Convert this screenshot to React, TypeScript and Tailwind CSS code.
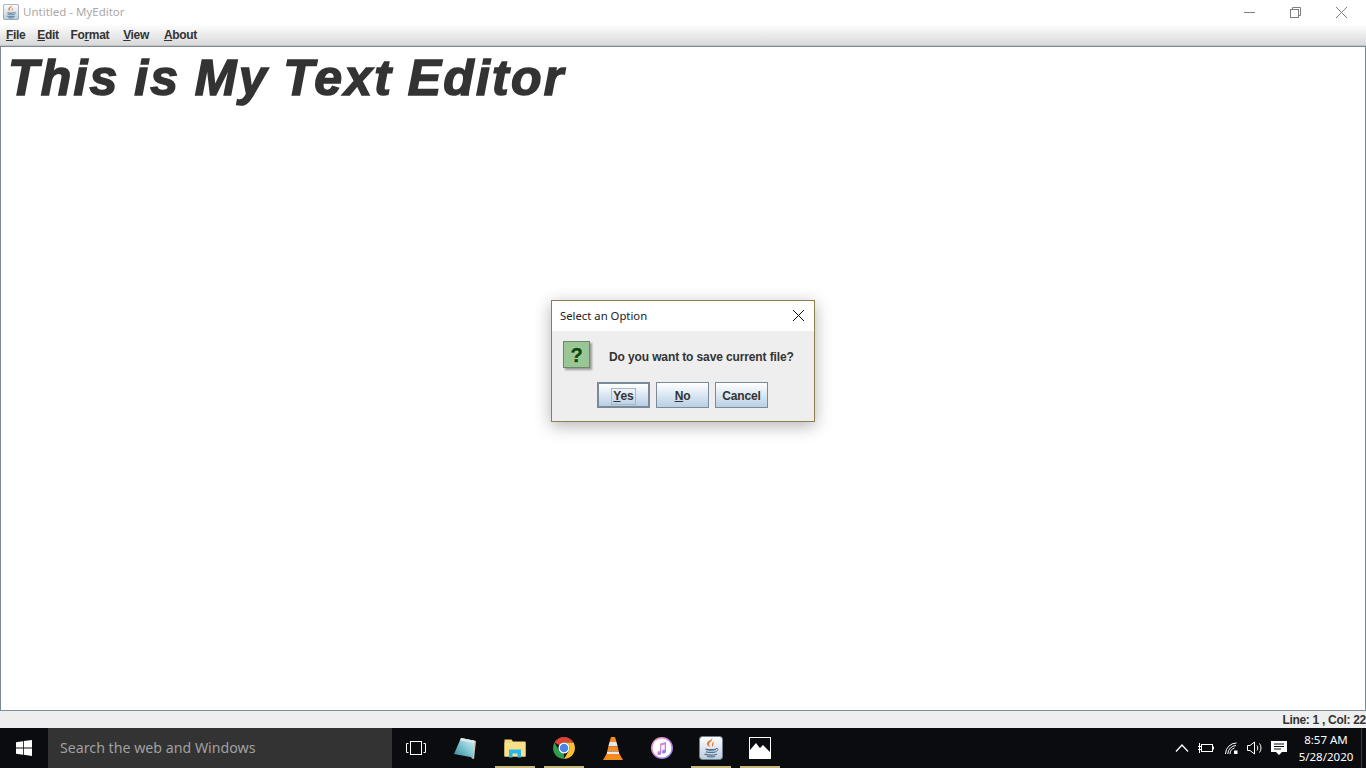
import type { ReactNode } from "react";

function Mnemonic({ first, rest }: { first: string; rest: string }) {
  return (
    <span>
      <span className="underline underline-offset-1">{first}</span>
      {rest}
    </span>
  );
}

function DialogButton({ label, first, rest, active }: { label?: string; first?: string; rest?: string; active?: boolean }) {
  return (
    <button
      className={
        "w-[53px] h-[26px] flex items-center justify-center bg-gradient-to-b from-white to-[#b8cfe5] text-xs tracking-[-0.15px] font-bold text-[#333333] " +
        (active ? "border-2 border-[#7a8a99]" : "border border-[#7a8a99]")
      }
    >
      {label ? (
        <span className="pt-px">{label}</span>
      ) : active ? (
        <span className="border border-[#a3b8cc] leading-[15px] px-px mt-[2px]">
          <Mnemonic first={first!} rest={rest!} />
        </span>
      ) : (
        <span className="pt-px">
          <Mnemonic first={first!} rest={rest!} />
        </span>
      )}
    </button>
  );
}

function JavaIcon({ size, id }: { size: number; id: string }) {
  return (
    <svg width={size} height={size} viewBox="0 0 24 24">
      <defs>
        <linearGradient id={id} x1="0" y1="0" x2="0" y2="1">
          <stop offset="0" stopColor="#ffffff" />
          <stop offset="1" stopColor="#bccbdc" />
        </linearGradient>
      </defs>
      <rect x="0.5" y="0.5" width="23" height="23" rx="3" fill={`url(#${id})`} stroke="#6d7f93" />
      <path d="M13 2c1.500 2.500-3 4-3 6.500 0 1.200 1 2 1.500 2.500-2.800-1-4.500-2.500-3-5C9.500 4.500 13 4 13 2z" fill="#e8792b" />
      <path d="M15 5.500c-1.500 1-2.500 2.500-2 4 .3.800.8 1.200 1 1.500-.2-1.500.5-3.500 1-5.500z" fill="#e8792b" />
      <path d="M6.500 12.500c3 .8 8 .8 10.500 0v1.500c-2.500 1-8 1-10.500 0z" fill="#4d7190" />
      <path d="M7 15.800c3 .7 7 .7 9.500 0M5.500 18.200c3.500 1 9.500 1 12.500 0M8 20.500c2.500.5 6 .5 8 0" stroke="#4d7190" strokeWidth="1.200" fill="none" />
      <path d="M17 12.500c2.500-.5 3 2.300-.5 3" stroke="#4d7190" strokeWidth="1" fill="none" />
    </svg>
  );
}

function TaskbarSlot({ children, open, width }: { children: ReactNode; open?: boolean; width: string }) {
  return (
    <div className={"relative h-full flex items-center justify-center shrink-0 " + width}>
      {children}
      {open && <div className="absolute bottom-0 left-[5px] right-[4px] h-[2px] bg-[#c8b77c]" />}
    </div>
  );
}

export default function App() {
  return (
    <div className="relative w-[1366px] h-[768px] overflow-hidden flex flex-col bg-[#eeeeee] font-['Liberation_Sans',Arial,sans-serif]">
      {/* window title */}
      <div className="h-[24px] bg-white flex items-center shrink-0 pl-[3px] pr-[2px]">
        <JavaIcon size={16} id="java-title" />
        <span className="ml-[4px] text-[11.5px] font-['Noto_Sans',sans-serif] text-[#a9a9a9]">Untitled - MyEditor</span>
        <div className="ml-auto flex items-center">
          <div className="w-[46px] flex justify-center">
            <svg width="11" height="11" viewBox="0 0 11 11" fill="none" stroke="#7f7f7f">
              <path d="M0 5.500h11" />
            </svg>
          </div>
          <div className="w-[46px] flex justify-center">
            <svg width="11" height="11" viewBox="0 0 11 11" fill="none" stroke="#7f7f7f">
              <rect x="0.500" y="2.500" width="8" height="8" />
              <path d="M2.500 2.500v-2h8v8h-2" />
            </svg>
          </div>
          <div className="w-[46px] flex justify-center">
            <svg width="11" height="11" viewBox="0 0 11 11" fill="none" stroke="#7f7f7f">
              <path d="M0 0l11 11M11 0L0 11" />
            </svg>
          </div>
        </div>
      </div>

      {/* menu bar */}
      <div className="h-[22px] bg-gradient-to-b from-white to-[#d9d9d9] border-b border-[#c4c4c4] flex items-center pl-[6px] text-xs tracking-[-0.35px] font-bold text-[#333333] shrink-0">
        <span className="mr-[12px]">
          <Mnemonic first="F" rest="ile" />
        </span>
        <span className="mr-[12px]">
          <Mnemonic first="E" rest="dit" />
        </span>
        <span className="mr-[14px]">
          Fo<span className="underline underline-offset-1">r</span>mat
        </span>
        <span className="mr-[15px]">
          <Mnemonic first="V" rest="iew" />
        </span>
        <Mnemonic first="A" rest="bout" />
      </div>

      {/* editor */}
      <div className="flex-1 bg-white border border-[#7a8a99] pl-[7px] pt-[2px] min-h-0">
        <div className="text-[50px] leading-[58px] font-bold italic tracking-[2.2px] [word-spacing:-1.500px] text-[#333333] [-webkit-text-stroke:1.5px_#333333] whitespace-nowrap">
          This is My Text Editor
        </div>
      </div>

      {/* status bar */}
      <div className="h-[17px] pt-px flex items-center justify-end text-xs tracking-[-0.3px] font-bold text-[#333333] shrink-0 whitespace-nowrap">
        Line: 1 , Col: 22
      </div>

      {/* taskbar */}
      <div className="h-[40px] bg-[#0b0c10] flex items-center shrink-0 text-white">
        <div className="w-[48px] h-full flex items-center justify-center shrink-0">
          <svg width="16" height="16" viewBox="0 0 16 16" fill="#ffffff">
            <path d="M0 2.200l7-1V7.600H0zM7.800 1.100L16 0v7.600H7.800zM0 8.400h7v6.400l-7-1zM7.800 8.400H16V16l-8.200-1.200z" />
          </svg>
        </div>
        <div className="w-[344px] h-full bg-[#333333] flex items-center pl-[12px] text-[14.2px] font-['Noto_Sans',sans-serif] text-[#a0a0a0] shrink-0">
          Search the web and Windows
        </div>

        <TaskbarSlot width="w-[48px]">
          <svg width="20" height="14" viewBox="0 0 20 14" fill="none" stroke="#ffffff">
            <rect x="4.500" y="0.500" width="11" height="13" strokeWidth="1" />
            <path d="M2.500 2.500H0.500v9h2M17.500 2.500h2v9h-2" />
          </svg>
        </TaskbarSlot>
        <TaskbarSlot width="w-[50px]">
          <svg width="24" height="22" viewBox="0 0 24 22">
            <defs>
              <linearGradient id="pad" x1="0" y1="1" x2="1" y2="0">
                <stop offset="0" stopColor="#2f8797" />
                <stop offset="0.600" stopColor="#8fd0dc" />
                <stop offset="1" stopColor="#e0f0f2" />
              </linearGradient>
            </defs>
            <path d="M8 1l15 3-2 18-2-.5z" fill="#cfc8b4" />
            <path d="M8 1l13.500 2.700L20 20.500 1 17z" fill="url(#pad)" />
            <path d="M8 1l13.500 2.700-.4 2.500L7 3.500z" fill="#dfe6e8" />
          </svg>
        </TaskbarSlot>
        <TaskbarSlot width="w-[49px]" open>
          <svg width="22" height="20" viewBox="0 0 22 20">
            <path d="M0.500 1.500h7l1.500 2h12.500V18.500H0.500z" fill="#f4d777" />
            <path d="M0.500 4.500h21V18.500H0.500z" fill="#fbe08a" />
            <path d="M5 19.500v-8h12v8h-3.500v-4h-5v4z" fill="#29b6e8" />
          </svg>
        </TaskbarSlot>
        <TaskbarSlot width="w-[49px]" open>
          <svg width="24" height="24" viewBox="0 0 48 48">
            <path d="M24 2a22 22 0 0 1 19 11H24a11 11 0 0 0-9.500 5.500L5 13A22 22 0 0 1 24 2z" fill="#db4437" />
            <path d="M43 13a22 22 0 0 1-19 33l9.500-16.500A11 11 0 0 0 33.500 18.500 11 11 0 0 0 24 13z" fill="#fbc02d" />
            <path d="M5 13l9.500 16.500A11 11 0 0 0 24 35l-.1 11A22 22 0 0 1 5 13z" fill="#2e9e4f" />
            <circle cx="24" cy="24" r="11" fill="#ffffff" />
            <circle cx="24" cy="24" r="8.500" fill="#4a86e8" />
          </svg>
        </TaskbarSlot>
        <TaskbarSlot width="w-[49px]">
          <svg width="20" height="23" viewBox="0 0 20 23">
            <path d="M8 0h4l1.500 5h-7z" fill="#f58a1f" />
            <path d="M6.500 5h7l1.200 4.500H5.300z" fill="#e8e8e8" />
            <path d="M5.300 9.500h9.400l1.100 5H4.200z" fill="#f58a1f" />
            <path d="M4.200 14.500h11.600l.7 3h-13z" fill="#e8e8e8" />
            <path d="M3.500 17h13l3.500 6H0z" fill="#f58a1f" />
          </svg>
        </TaskbarSlot>
        <TaskbarSlot width="w-[49px]">
          <svg width="22" height="22" viewBox="0 0 22 22">
            <defs>
              <linearGradient id="itunes" x1="0" y1="0" x2="1" y2="1">
                <stop offset="0" stopColor="#f7a1c4" />
                <stop offset="0.500" stopColor="#ce7be0" />
                <stop offset="1" stopColor="#6a8dee" />
              </linearGradient>
            </defs>
            <circle cx="11" cy="11" r="11" fill="url(#itunes)" />
            <circle cx="11" cy="11" r="9.500" fill="#ffffff" />
            <path d="M9 6.500l6-1.500v9.500a2 2 0 1 1-1.300-1.800V7.500l-3.400.9v7.600a2 2 0 1 1-1.300-1.800z" fill="url(#itunes)" />
          </svg>
        </TaskbarSlot>
        <TaskbarSlot width="w-[49px]" open>
          <JavaIcon size={24} id="java-task" />
        </TaskbarSlot>
        <TaskbarSlot width="w-[49px]" open>
          <svg width="22" height="22" viewBox="0 0 22 22">
            <rect x="0" y="0" width="22" height="22" fill="#ffffff" />
            <rect x="1" y="1" width="20" height="20" fill="#0b0c10" />
            <path d="M1 21V13l6-7 3 4 1 1 3-3 7 7v6z" fill="#ffffff" />
          </svg>
        </TaskbarSlot>

        {/* tray */}
        <div className="ml-auto h-full flex items-center">
          <svg width="14" height="8" viewBox="0 0 14 8" fill="none" stroke="#ffffff" strokeWidth="1.300" className="mr-[9px]">
            <path d="M1 7.500L7 1l6 6.500" />
          </svg>
          <svg width="16" height="10" viewBox="0 0 16 10" fill="none" stroke="#ffffff" className="mr-[11px]">
            <rect x="3.500" y="1.500" width="11" height="7" />
            <path d="M15.500 3.500v3" />
            <path d="M0 3.500h3M0 6.500h3M1.500 0v10" />
          </svg>
          <svg width="13" height="12" viewBox="0 0 13 12" fill="none" stroke="#ffffff" className="mr-[9px]">
            <path d="M0.500 12a11 11 0 0 1 11-11M2.800 12A8.700 8.700 0 0 1 11 3.500M5 12a6.500 6.500 0 0 1 4.500-6" />
            <rect x="9" y="8.500" width="3.500" height="3.500" fill="#ffffff" stroke="none" />
          </svg>
          <svg width="16" height="14" viewBox="0 0 16 14" fill="none" stroke="#ffffff" className="mr-[8px]">
            <path d="M0.500 4.500h2.500L7.500 1v12L3 9.500H0.500z" />
            <path d="M10 4.500c1 1.500 1 3.500 0 5M12.500 2.500c2 2.500 2 6.500 0 9" />
          </svg>
          <svg width="16" height="16" viewBox="0 0 16 16" className="mr-[6px]">
            <path d="M0 1h16v11h-5l-3 3-3-3H0z" fill="#ffffff" />
            <path d="M3 4h10M3 6.500h10M3 9h7" stroke="#0b0c10" />
          </svg>
          <div className="w-[66px] text-center text-[11.5px] leading-[17px] font-['Noto_Sans',sans-serif]">
            <div>8:57 AM</div>
            <div>5/28/2020</div>
          </div>
          <div className="w-[2px]" />
          <div className="w-px h-full bg-[#3a3a3a]" />
          <div className="w-[4px]" />
        </div>
      </div>

      {/* modal dialog */}
      <div className="absolute left-[551px] top-[300px] w-[264px] h-[122px] border border-[#8c7f4f] bg-[#eeeeee] shadow-[0_4px_16px_rgba(0,0,0,0.3)] flex flex-col">
        <div className="h-[30px] bg-white flex items-center justify-between pl-[8px] pr-[10px] shrink-0">
          <span className="text-[11.3px] font-['Noto_Sans',sans-serif] text-[#222222]">Select an Option</span>
          <svg width="11" height="11" viewBox="0 0 11 11" fill="none" stroke="#111111" className="mb-[2px]">
            <path d="M0 0l11 11M11 0L0 11" />
          </svg>
        </div>
        <div className="flex items-center pl-[11px] pt-[10px]">
          <div className="w-[27px] h-[27px] bg-[#9ac594] border border-[#6c8a67] shadow-[2px_2px_2px_rgba(0,0,0,0.35)] flex items-center justify-center text-[20px] font-bold text-[#0a4a0a] [-webkit-text-stroke:0.5px_#0a4a0a] [text-shadow:0_0_2px_#e4f5e4]">
            ?
          </div>
          <span className="ml-[19px] mt-[4px] text-xs tracking-[-0.12px] font-bold text-[#333333]">Do you want to save current file?</span>
        </div>
        <div className="flex gap-[6px] mt-[14px] pl-[45px]">
          <DialogButton first="Y" rest="es" active />
          <DialogButton first="N" rest="o" />
          <DialogButton label="Cancel" />
        </div>
      </div>
    </div>
  );
}
